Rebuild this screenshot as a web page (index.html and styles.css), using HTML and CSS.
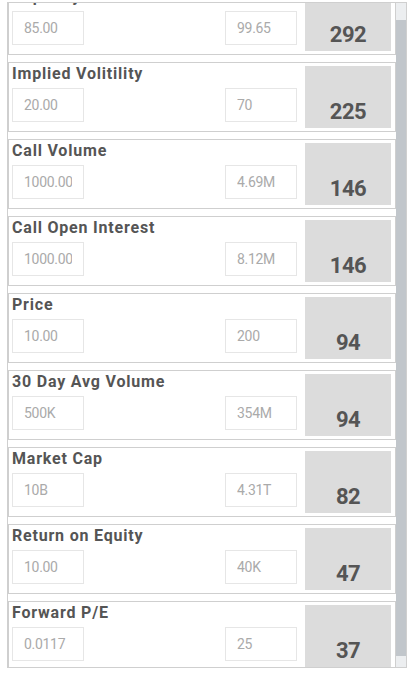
FILE: index.html
```html
<!DOCTYPE html>
<html lang="en">
<head>
  <meta charset="UTF-8" />
  <meta name="viewport" content="width=device-width, initial-scale=1.0" />
  <title>Filtros</title>
  <link rel="stylesheet" href="styles.css">
</head>
<body>
  <div class="painel">
    <div id="lista" class="lista"></div>
    <div class="barra"><div class="polegar"></div></div>
  </div>

  <script src="script.js"></script>
</body>
</html>
```

FILE: styles.css
```css
body {
  font-family: Roboto, "Liberation Sans", sans-serif;
  background: #fff;
  color: #555;
  margin: 0;
  padding: 2px 0 0 7px;
}
.painel {
  display: flex;
  width: 400px;
  height: 666px;
  box-sizing: border-box;
  border: 1px solid #cfcfcf;
}
.lista {
  flex: 1;
  overflow: hidden;
}
.barra {
  width: 10px;
  background: #eceef0;
}
.polegar {
  margin-top: 17px;
  height: 636px;
  background: #c1c6cb;
}
.filtro {
  display: flex;
  height: 70px;
  box-sizing: border-box;
  border: 1px solid #cfcfcf;
  padding: 0 4px 0 3px;
  margin-bottom: 7px;
}
.filtro .info {
  flex: 1;
}
.filtro h2 {
  margin: 1px 0 0 0;
  font-size: 16px;
  line-height: 19px;
  font-weight: bold;
  letter-spacing: 0.8px;
  white-space: nowrap;
}
.campos {
  display: flex;
  justify-content: space-between;
  margin-top: 5px;
}
.campos input {
  width: 72px;
  height: 34px;
  box-sizing: border-box;
  border: 1px solid #e6e6e6;
  padding: 0 11px;
  margin: 0;
  font-family: inherit;
  font-size: 14px;
  letter-spacing: -0.3px;
  color: #aaa;
  background: #fff;
  outline: none;
}
.total {
  width: 86px;
  margin: 3px 0 3px 8px;
  background: #dcdcdc;
  display: flex;
  align-items: flex-end;
  justify-content: center;
  padding-bottom: 5px;
  box-sizing: border-box;
  font-size: 22px;
  line-height: 22px;
  font-weight: bold;
  letter-spacing: -0.5px;
}
```

FILE: script.js
```js
const filtros = [
  { nome: "Capacity", min: "85.00", max: "99.65", total: 292 },
  { nome: "Implied Volitility", min: "20.00", max: "70", total: 225 },
  { nome: "Call Volume", min: "1000.00", max: "4.69M", total: 146 },
  { nome: "Call Open Interest", min: "1000.00", max: "8.12M", total: 146 },
  { nome: "Price", min: "10.00", max: "200", total: 94 },
  { nome: "30 Day Avg Volume", min: "500K", max: "354M", total: 94 },
  { nome: "Market Cap", min: "10B", max: "4.31T", total: 82 },
  { nome: "Return on Equity", min: "10.00", max: "40K", total: 47 },
  { nome: "Forward P/E", min: "0.0117", max: "25", total: 37 }
];

const lista = document.getElementById("lista");

for (const f of filtros) {
  const div = document.createElement("div");
  div.className = "filtro";
  div.innerHTML = `
    <div class="info">
      <h2>${f.nome}</h2>
      <div class="campos">
        <input type="text" value="${f.min}" />
        <input type="text" value="${f.max}" />
      </div>
    </div>
    <div class="total">${f.total}</div>
  `;
  lista.appendChild(div);
}

// a lista aparece já um pouco rolada
lista.scrollTop = 18;
```
